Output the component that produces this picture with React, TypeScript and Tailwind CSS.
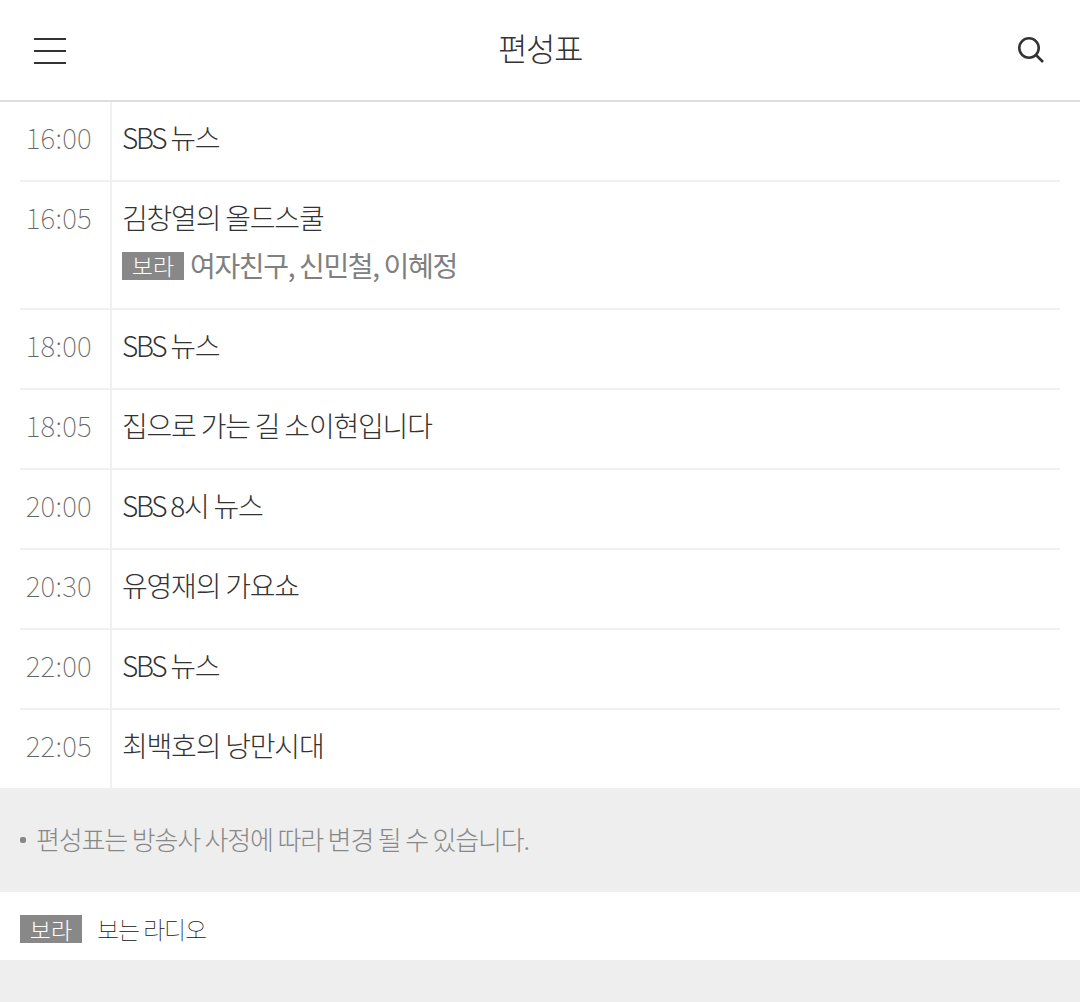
const font = "font-['Noto_Sans_CJK_KR','Noto_Sans',sans-serif]";

type Program = { time: string; title: string; guests?: string };

const programs: Program[] = [
  { time: "16:00", title: "SBS 뉴스" },
  { time: "16:05", title: "김창열의 올드스쿨", guests: "여자친구, 신민철, 이혜정" },
  { time: "18:00", title: "SBS 뉴스" },
  { time: "18:05", title: "집으로 가는 길 소이현입니다" },
  { time: "20:00", title: "SBS 8시 뉴스" },
  { time: "20:30", title: "유영재의 가요쇼" },
  { time: "22:00", title: "SBS 뉴스" },
  { time: "22:05", title: "최백호의 낭만시대" },
];

function Badge() {
  return (
    <span className="flex h-7 w-[62px] shrink-0 items-center justify-center bg-[#888888] text-[23px] font-light leading-none text-white">
      보라
    </span>
  );
}

function Title({ text }: { text: string }) {
  // the Latin channel name runs tighter than the Hangul around it
  if (!text.startsWith("SBS")) return <>{text}</>;
  return (
    <>
      <span className="tracking-[-2.3px]">SBS</span>
      {text.slice(3)}
    </>
  );
}

function Row({ program, last }: { program: Program; last: boolean }) {
  return (
    <li className={`flex ${last ? "" : "border-b-2 border-[#f0f0f0]"}`}>
      <div className="w-[90px] shrink-0 pt-[17px] pr-[18px] text-right text-[28px] font-thin leading-[36px] tracking-[0.3px] text-[#666666]">
        {program.time}
      </div>
      <div className="flex-1 border-l-2 border-[#f0f0f0] pl-[10px] pt-[17px] pb-[25px]">
        <div className="text-[28px] font-extralight leading-[36px] tracking-[-1.2px] text-[#333333]">
          <Title text={program.title} />
        </div>
        {program.guests && (
          <div className="mt-[13px] flex h-[35px] items-center gap-[6px]">
            <Badge />
            <span className="text-[28px] font-normal leading-[35px] tracking-[-1.35px] text-[#808080]">
              {program.guests}
            </span>
          </div>
        )}
      </div>
    </li>
  );
}

export default function App() {
  return (
    <div className={`flex min-h-[1002px] flex-col bg-white ${font}`}>
      <header className="flex h-[102px] items-center justify-between border-b-2 border-[#dddddd] pl-[34px] pr-[36px]">
        <div className="mt-[2px] flex w-8 flex-col gap-[10px]">
          <span className="h-0.5 bg-[#333333]" />
          <span className="h-0.5 bg-[#333333]" />
          <span className="h-0.5 bg-[#333333]" />
        </div>
        <h1 className="mr-[4px] pb-[6px] text-[32px] font-light leading-none tracking-[-1.5px] text-[#333333]">
          편성표
        </h1>
        <svg width="26" height="26" viewBox="0 0 26 26" fill="none" stroke="#333333" strokeWidth="2.6">
          <circle cx="11" cy="11" r="9.7" />
          <path d="M18 18l7 7" />
        </svg>
      </header>
      <ul className="mx-5">
        {programs.map((program, index) => (
          <Row key={index} program={program} last={index === programs.length - 1} />
        ))}
      </ul>
      <div className="flex h-[104px] items-center gap-[10px] bg-[#eeeeee] pl-5">
        <span className="size-[6px] rounded-[2px] bg-[#888888]" />
        <p className="pb-[2px] text-[26px] font-light leading-none tracking-[-1.15px] text-[#888888]">
          편성표는 방송사 사정에 따라 변경 될 수 있습니다.
        </p>
      </div>
      <div className="flex h-[68px] items-center gap-[15px] pl-5 pt-[6px]">
        <Badge />
        <span className="text-[24px] font-thin leading-none tracking-[-1.1px] text-[#111111]">
          보는 라디오
        </span>
      </div>
      <div className="flex-1 bg-[#eeeeee]" />
    </div>
  );
}
